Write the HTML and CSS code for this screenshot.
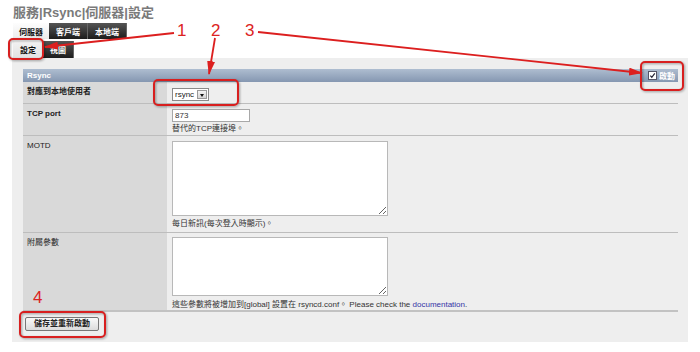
FILE: index.html
```html
<!DOCTYPE html>
<html lang="zh-Hant">
<head>
  <meta charset="UTF-8" />
  <meta name="viewport" content="width=device-width, initial-scale=1.0" />
  <title>服務|Rsync|伺服器|設定</title>
  <link rel="stylesheet" href="styles.css">
</head>
<body>
  <h1 class="title">服務|Rsync|伺服器|設定</h1>

  <!-- 上層分頁 -->
  <div class="tabs">
    <span class="tab active">伺服器</span>
    <span class="tab">客戶端</span>
    <span class="tab">本地端</span>
  </div>
  <!-- 下層分頁 -->
  <div class="tabs sub">
    <span class="tab active">設定</span>
    <span class="tab">視圖</span>
  </div>

  <div class="panel">
    <div class="form">
      <div class="topic">
        <span>Rsync</span>
        <label class="enable"><span class="check"><svg width="8" height="8" viewBox="0 0 8 8"><path d="M1.5 4.2 L3.2 6 L6.6 1.6" fill="none" stroke="#223" stroke-width="1.4"/></svg></span>啟動</label>
      </div>

      <div class="row r1">
        <div class="label req">對應到本地使用者</div>
        <div class="cell">
          <span class="select"><select><option>rsync</option></select><span class="arrow"></span></span>
        </div>
      </div>

      <div class="row r2">
        <div class="label req">TCP port</div>
        <div class="cell">
          <input class="text" type="text" value="873">
          <div class="hint">替代的TCP連接埠。</div>
        </div>
      </div>

      <div class="row r3">
        <div class="label">MOTD</div>
        <div class="cell">
          <textarea class="motd"></textarea>
          <div class="hint">每日新訊(每次登入時顯示)。</div>
        </div>
      </div>

      <div class="row r4">
        <div class="label">附屬參數</div>
        <div class="cell">
          <textarea class="aux"></textarea>
          <div class="hint">這些參數將被增加到[global] 設置在 rsyncd.conf。 Please check the <a href="#">documentation</a>.</div>
        </div>
      </div>

      <div class="actions">
        <button class="btn">儲存並重新啟動</button>
      </div>
    </div>
  </div>

  <!-- 紅色標註 -->
  <svg class="marks" width="700" height="352" viewBox="0 0 700 352">
    <defs>
      <marker id="ah" markerUnits="userSpaceOnUse" markerWidth="14" markerHeight="8" refX="13" refY="4" orient="auto">
        <path d="M0 0 L14 4 L0 8 z" fill="#dc1f1f"/>
      </marker>
    </defs>
    <g class="boxes">
      <rect x="9" y="39" width="34" height="20" rx="4"/>
      <rect x="154" y="80" width="84" height="25" rx="4"/>
      <rect x="641" y="62" width="42" height="28" rx="4"/>
      <rect x="20" y="312" width="85" height="25" rx="4"/>
    </g>
    <g class="lines">
      <line x1="174" y1="33" x2="45" y2="47" marker-end="url(#ah)"/>
      <line x1="215" y1="38" x2="209" y2="74" marker-end="url(#ah)"/>
      <line x1="258" y1="32" x2="642" y2="73" marker-end="url(#ah)"/>
    </g>
    <g class="nums">
      <text x="177" y="36">1</text>
      <text x="211" y="36">2</text>
      <text x="245" y="36">3</text>
      <text x="33" y="303">4</text>
    </g>
  </svg>
</body>
</html>
```

FILE: styles.css
```css
/* ===== 基本 ===== */
body {
  margin: 0;
  font-family: "Liberation Sans", "Noto Sans CJK TC", sans-serif;
  font-size: 8px;
  color: #222;
  background: #fff;
  position: relative;
  width: 700px;
  height: 352px;
  overflow: hidden;
}

.title {
  margin: 0 0 2px;
  padding: 5px 0 0 13px;
  font-size: 13px;
  line-height: 16px;
  font-weight: bold;
  color: #7a7a7a;
}

/* 分頁 */
.tabs {
  display: flex;
  margin-left: 13px;
  height: 16px;
}
.tabs.sub {
  margin-top: 2px;
  height: 17px;
}
.tab {
  display: flex;
  align-items: center;
  padding: 0 7px;
  font-weight: bold;
  color: #fff;
  background: linear-gradient(#555, #1c1c1c);
  border-right: 1px solid #666;
}
.tab.active {
  color: #111;
  padding: 0 6px;
  background: linear-gradient(#fdfdfd, #ececec);
  border-right: 0;
}
.tabs.sub .tab.active {
  padding: 0 7px;
  background: linear-gradient(#f2f2f2, #e2e2e2);
}

/* 內容區 */
.panel {
  margin-left: 12px;
  width: 676px;
  height: 284px;
  box-sizing: border-box;
  padding: 11px 10px 0 11px;
  background: #eee;
}

.topic {
  display: flex;
  justify-content: space-between;
  align-items: center;
  height: 13px;
  padding: 0 3px 0 4px;
  font-weight: bold;
  color: #fff;
  background: linear-gradient(#aebdd0, #8597b1);
}
.enable {
  display: flex;
  align-items: center;
  gap: 2px;
}
.check {
  display: inline-flex;
  width: 7px;
  height: 7px;
  border: 1px solid #556;
  background: #fff;
}
.check svg {
  width: 7px;
  height: 7px;
}

.row {
  display: grid;
  grid-template-columns: 144px 1fr;
  border-bottom: 1px solid #bdbdbd;
}
.label {
  background: #d9d9d9;
  padding: 4px 4px 0;
  line-height: 11px;
}
.label.req {
  font-weight: bold;
}
.cell {
  padding: 5px 5px 0;
  line-height: 11px;
}
.r1 .cell { padding-top: 6px; padding-bottom: 2px; }
.r2 .cell { padding-bottom: 1px; }
.r3 .cell { padding-bottom: 3px; }
.r4 .cell { padding-top: 4px; }
.r4 { border-bottom: 2px solid #c2c2c2; }

.hint { margin-top: 1px; color: #333; }
.r3 .hint { margin-top: 2px; }
.r4 .hint { margin-top: 3px; }
.hint a { color: #3535a6; text-decoration: none; }

/* 表單元件 */
.select {
  display: inline-flex;
  height: 13px;
  box-sizing: border-box;
  border: 1px solid #8a8a8a;
  background: #fff;
  vertical-align: top;
}
.select select {
  appearance: none;
  border: 0;
  margin: 0;
  padding: 0 1px 0 2px;
  width: 23px;
  font: inherit;
  line-height: 11px;
  background: transparent;
  color: #222;
}
.select .arrow {
  position: relative;
  width: 10px;
  margin: 1px;
  background: linear-gradient(#f4f4f4, #d4d4d4);
  border: 1px solid #999;
  box-sizing: border-box;
}
.select .arrow::after {
  content: "";
  position: absolute;
  left: 2px;
  top: 3px;
  border-left: 2px solid transparent;
  border-right: 2px solid transparent;
  border-top: 3px solid #111;
}

.text {
  display: block;
  width: 78px;
  height: 13px;
  box-sizing: border-box;
  margin: 0;
  padding: 0 2px;
  border: 1px solid #a8a8a8;
  font: inherit;
  color: #333;
}

textarea {
  display: block;
  width: 216px;
  box-sizing: border-box;
  margin: 0;
  border: 1px solid #b8b8b8;
  background: #fff;
}
.motd { height: 75px; }
.aux { height: 59px; }

.actions {
  padding: 5px 2px;
}
.btn {
  font: inherit;
  font-weight: bold;
  height: 14px;
  padding: 0 8px;
  line-height: 12px;
  color: #222;
  background: linear-gradient(#fafafa, #dcdcdc);
  border: 1px solid #777;
  border-radius: 2px;
}

/* 紅色標註（覆蓋在畫面上） */
.marks {
  position: absolute;
  left: 0;
  top: 0;
  pointer-events: none;
}
.boxes rect {
  fill: none;
  stroke: #d81f1f;
  stroke-width: 2;
  filter: drop-shadow(1px 1px 1px rgba(0, 0, 0, 0.35));
}
.lines line {
  stroke: #dc1f1f;
  stroke-width: 1.8;
}
.nums text {
  font-family: "Liberation Sans", sans-serif;
  font-size: 17px;
  fill: #dc2323;
}
```
